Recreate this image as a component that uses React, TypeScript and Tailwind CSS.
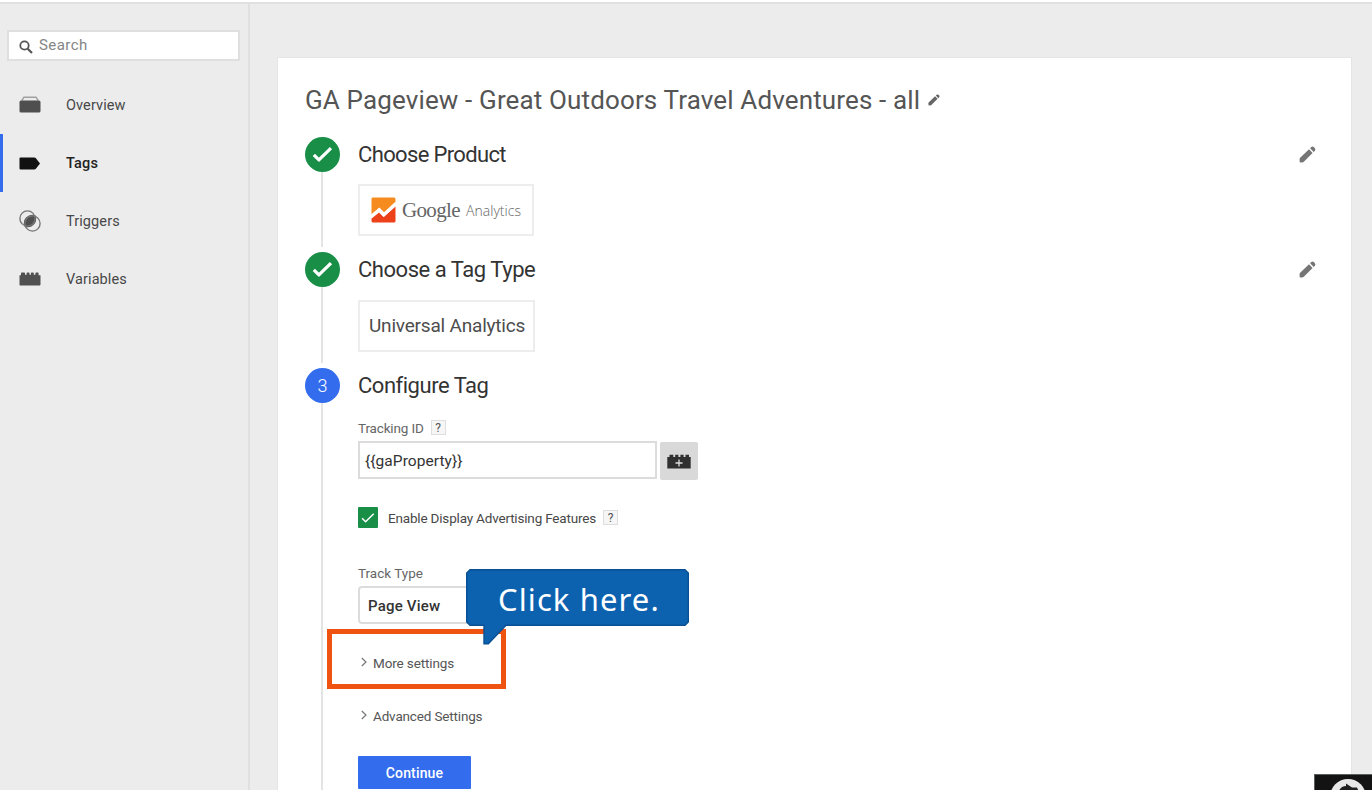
import React from "react";

type IconProps = { className?: string };

const Pencil = ({ className = "" }: IconProps) => (
  <svg viewBox="0 0 17 17" className={className} fill="currentColor">
    <path d="M.9 11.9 10 3.2 13.6 6.9 4.8 15.7Q4 16.4 3 16.4H1.7Q.6 16.4.6 15.4V13Q.6 12.4.9 11.9Z" />
    <path d="M11.1 2.2 12.3 1.1Q13.8.1 15 1.2L15.9 2.2Q16.9 3.4 15.9 4.7L14.7 5.9Z" />
  </svg>
);

const OverviewIcon = () => (
  <svg viewBox="0 0 22 17" className="mb-px h-[17px] w-[22px]">
    <path d="M2.8 4.5 5 1.2H17L19.2 4.5" fill="none" stroke="#a0a0a0" strokeWidth="1.4" />
    <path d="M2 4.4H20Q21.5 4.4 21.5 6V15Q21.5 16.5 20 16.5H2Q.5 16.5.5 15V6Q.5 4.4 2 4.4Z" fill="#4f4f4f" />
  </svg>
);

const TagIcon = () => (
  <svg viewBox="0 0 22 13" className="h-[13px] w-[22px]">
    <path d="M1.5.5H15Q16.3.5 17.1 1.5L21 6.5 17.1 11.5Q16.3 12.5 15 12.5H1.5Q.5 12.5.5 11.5V1.5Q.5.5 1.5.5Z" fill="#111" />
  </svg>
);

const TriggerIcon = () => (
  <svg viewBox="0 0 22 22" className="mb-px h-[22px] w-[22px]">
    <path d="M6.2 15.8A7.5 7.5 0 0 1 15.8 6.2 7.5 7.5 0 0 1 6.2 15.8Z" fill="#505050" stroke="#505050" strokeWidth="1.8" />
    <circle cx="8.5" cy="8.5" r="7.6" fill="none" stroke="#777" strokeWidth="1.4" />
    <circle cx="13.5" cy="13.5" r="7.6" fill="none" stroke="#777" strokeWidth="1.4" />
  </svg>
);

const BrickIcon = () => (
  <svg viewBox="0 0 22 14" className="h-[14px] w-[22px]" fill="#505050">
    <path d="M.5 13V3.2H2V1.2Q2 .4 2.8.4H5.2Q6 .4 6 1.2V2.8H7.6V1.2Q7.6.4 8.3.4H9.8Q10.5.4 10.5 1.2V2.8H11.9V1.2Q11.9.4 12.6.4H14.1Q14.8.4 14.8 1.2V2.8H16.4V1.2Q16.4.4 17.1.4H18.8Q19.6.4 19.6 1.2V3.2H21.5V12.6Q21.5 13.4 20.8 13.4H1.1Q.5 13.4.5 13Z" />
  </svg>
);

const BrickPlusIcon = () => (
  <svg viewBox="0 0 24 15" className="h-[15px] w-[24px]">
    <path d="M.3 14.5V3H2.5V.8H6.3V3H8.2V.8H11.4V3H13.4V.8H16.6V3H18.5V.8H22V3H23.7V14.5Z" fill="#303030" />
    <path d="M12 5.5V12.5M8.5 9H15.5" stroke="#ddd" strokeWidth="1.3" />
  </svg>
);

const CheckIcon = ({ className = "" }: IconProps) => (
  <svg viewBox="0 0 22 18" className={className} fill="none" stroke="white" strokeLinejoin="round">
    <path d="M1.8 9.5 7.2 14.8 20 2.2" />
  </svg>
);

const AnalyticsLogo = () => (
  <svg viewBox="0 0 25 26" className="h-[26px] w-[25px]">
    <path d="M1.5.5H23Q24.5.5 24.5 2V5L13 15.5 8.2 11 .5 18V2Q.5.5 1.5.5Z" fill="#f68b1f" />
    <path d="M24.5 9.5V24Q24.5 25.5 23 25.5H2Q.5 25.5.5 24V21.5L8 15.5 12.5 20Z" fill="#ed411a" />
    <path d="M.2 19.5 8.3 12.7 12.9 17.7 24.8 6.7" fill="none" stroke="white" strokeWidth="3.2" />
  </svg>
);

const Chevron = () => (
  <svg viewBox="0 0 6 10" className="mr-[6px] mb-[2px] h-[10px] w-[6px]">
    <path d="M.8 1 5 5 .8 9" fill="none" stroke="#777" strokeWidth="1.2" />
  </svg>
);

const Help = ({ className = "" }: IconProps) => (
  <span className={`flex h-[15px] w-[15px] items-center justify-center border border-[#dedede] bg-[#f6f6f6] text-[12px] leading-none text-[#555] ${className}`}>?</span>
);

const navItems = [
  { label: "Overview", icon: <OverviewIcon />, active: false, track: "tracking-[0.1px]" },
  { label: "Tags", icon: <TagIcon />, active: true, track: "tracking-[0.2px]" },
  { label: "Triggers", icon: <TriggerIcon />, active: false, track: "tracking-[0.1px]" },
  { label: "Variables", icon: <BrickIcon />, active: false, track: "tracking-[0.1px]" },
];

function Sidebar() {
  return (
    <aside className="w-[250px] shrink-0 border-r-2 border-[#e0e0e0] pt-[26px]">
      <div className="ml-[7px] flex h-[31px] w-[233px] items-center border-2 border-[#dfdfdf] bg-white pl-[10px] text-[15px] text-[#858585]">
        <svg viewBox="0 0 14 14" className="mt-[2px] mr-[6px] h-[14px] w-[14px]" fill="none" stroke="#555">
          <circle cx="5.5" cy="5.5" r="4.2" strokeWidth="1.8" />
          <path d="M8.7 8.7 13 13" strokeWidth="2.2" />
        </svg>
        <span className="tracking-[0.45px]">Search</span>
      </div>
      <nav className="mt-[15px]">
        {navItems.map((item) => (
          <div
            key={item.label}
            className={`flex h-[58px] items-center border-l-[3px] pl-4 text-[14.5px] ${item.active ? "border-[#336dee] font-medium text-[#222]" : "border-transparent text-[#484848]"}`}
          >
            <span className="flex w-[47px]">{item.icon}</span>
            <span className={`mt-[2px] ${item.track}`}>{item.label}</span>
          </div>
        ))}
      </nav>
    </aside>
  );
}

type StepProps = {
  title: string;
  titleClass: string;
  badge: React.ReactNode;
  badgeClass: string;
  className: string;
  lineClass?: string;
  editable?: boolean;
  children: React.ReactNode;
};

function Step({ title, titleClass, badge, badgeClass, className, lineClass = "", editable, children }: StepProps) {
  return (
    <section className={`flex ${className}`}>
      <div className="flex w-[35px] shrink-0 flex-col items-center">
        <div className={`flex h-[35px] w-[35px] shrink-0 items-center justify-center rounded-full ${badgeClass}`}>{badge}</div>
        <div className={`mr-px w-[2px] flex-1 bg-[#e4e4e4] ${lineClass}`} />
      </div>
      <div className="ml-[18px] flex-1">
        <div className="flex h-[36px] items-center justify-between pr-[35px]">
          <h2 className={`text-[22px] leading-[26px] text-[#333] ${titleClass}`}>{title}</h2>
          {editable && <Pencil className="mb-[2px] h-[17px] w-[17px] text-[#757575]" />}
        </div>
        {children}
      </div>
    </section>
  );
}

export default function App() {
  return (
    <div className="relative flex h-[790px] w-[1372px] flex-col overflow-hidden bg-[#ececec] font-['Roboto',sans-serif]">
      <div className="h-[4px] shrink-0 border-b-2 border-[#e0e0e0] bg-white" />
      <div className="flex min-h-0 flex-1">
        <Sidebar />
        <main className="flex-1 pt-[53px] pl-[27px]">
          <div className="h-[760px] w-[1075px] border border-[#e5e5e5] bg-white pt-[25px] pl-[27px]">
            <div className="flex h-[34px] items-center">
              <h1 className="text-[26px] leading-[34px] font-normal tracking-[0.14px] whitespace-nowrap text-[#555]">GA Pageview - Great Outdoors Travel Adventures - all</h1>
              <Pencil className="ml-[8px] h-[12px] w-[12px] text-[#666]" />
            </div>

            <Step
              className="mt-[20px] h-[115px]"
              title="Choose Product"
              titleClass="tracking-[-0.65px]"
              badgeClass="bg-[#188e47]"
              badge={<CheckIcon className="h-[17px] w-[21px] stroke-[3.4]" />}
              lineClass="mb-[5px]"
              editable
            >
              <div className="mt-[11px] flex h-[52px] w-[176px] items-center border-2 border-[#ededed] pl-[11px]">
                <AnalyticsLogo />
                <span className="ml-[6px] font-['Liberation_Serif',serif] text-[21px] leading-[24px] tracking-[-0.65px] text-[#666]">Google</span>
                <span className="ml-[6px] font-['Open_Sans',sans-serif] text-[14px] font-light tracking-[0.05px] text-[#666]">Analytics</span>
              </div>
            </Step>

            <Step
              className="h-[116px]"
              title="Choose a Tag Type"
              titleClass="tracking-[-0.46px]"
              badgeClass="bg-[#188e47]"
              badge={<CheckIcon className="h-[17px] w-[21px] stroke-[3.4]" />}
              lineClass="mb-[5px]"
              editable
            >
              <div className="mt-[12px] flex h-[52px] w-[177px] items-center border-2 border-[#ededed] pl-[9px] text-[19px] tracking-[-0.2px] whitespace-nowrap text-[#4d4d4d]">Universal Analytics</div>
            </Step>

            <Step
              className="h-[470px]"
              title="Configure Tag"
              titleClass="tracking-[-0.48px]"
              badgeClass="bg-[#336dee]"
              badge={<span className="text-[18px] font-light text-white">3</span>}
            >
              <div className="mt-[15px] flex h-[17px] items-center text-[13.5px] text-[#666]">
                <span className="mt-px tracking-[-0.15px]">Tracking ID</span>
                <Help className="ml-[7px]" />
              </div>
              <div className="mt-[5px] flex">
                <div className="flex h-[38px] w-[299px] items-center border-2 border-[#dcdcdc] bg-white pl-[5px] text-[15.5px] tracking-[0.05px] text-[#333]">
                  <span className="mt-[3px]">{"{{gaProperty}}"}</span>
                </div>
                <div className="mt-px ml-[3px] flex h-[38px] w-[38px] items-center justify-center rounded-[2px] bg-[#d9d9d9]">
                  <BrickPlusIcon />
                </div>
              </div>
              <div className="mt-[27px] flex h-[21px] items-center text-[13.5px] text-[#484848]">
                <span className="flex h-[21px] w-[20px] items-center justify-center rounded-[1px] bg-[#188e47]">
                  <CheckIcon className="h-[12px] w-[14px] stroke-[2.4]" />
                </span>
                <span className="mt-px ml-[10px] tracking-[-0.18px]">Enable Display Advertising Features</span>
                <Help className="ml-[7px]" />
              </div>
              <div className="mt-[37px] h-[17px] text-[13.5px] leading-[17px] text-[#666]">Track Type</div>
              <div className="mt-[4px] flex h-[38px] w-[210px] items-center rounded-[4px] border-2 border-[#dcdcdc] pl-[8px] text-[15px] font-medium tracking-[0.2px] text-[#333]">
                <span className="mt-[2px]">Page View</span>
              </div>

              <div className="relative mt-[28px] flex h-[22px] items-center pl-[3px] text-[13.5px] text-[#555]">
                <Chevron />
                <span className="tracking-[-0.12px]">More settings</span>
                <div className="absolute -top-[23px] -left-[31px] h-[60px] w-[179px] border-[5px] border-[#ee5312]" />
                <div className="absolute -top-[83px] left-[108px] h-[76px] w-[224px]">
                  <svg viewBox="0 0 224 76" className="absolute inset-0 h-[76px] w-[224px]">
                    <path d="M4 .7H219L222.3 4V53L219 56.3H40L22.3 74.8H18V56.3H4L.7 53V4Z" fill="#0d62b0" stroke="#094f93" strokeWidth="1.4" />
                  </svg>
                  <span className="absolute top-[8px] left-[32px] font-['Noto_Sans',sans-serif] text-[31px] leading-[44px] font-normal tracking-[1.1px] whitespace-nowrap text-white">Click here.</span>
                </div>
              </div>
              <div className="mt-[31px] flex h-[22px] items-center pl-[3px] text-[13.5px] text-[#555]">
                <Chevron />
                <span className="tracking-[-0.16px]">Advanced Settings</span>
              </div>
              <button className="mt-[29px] flex h-[33px] w-[113px] items-center justify-center rounded-[1px] bg-[#336dee] pt-px text-[14px] font-medium tracking-[0.15px] text-white">Continue</button>
            </Step>
          </div>
        </main>
      </div>
      <div className="absolute top-[774px] left-[1314px] h-[16px] w-[58px] overflow-hidden border-t border-l border-[#59605b] bg-[#131313]">
        <svg viewBox="0 0 58 16" className="h-[16px] w-[58px]">
          <circle cx="33" cy="22" r="18" fill="#e8e8e8" />
          <path d="M24 16Q26 11 31 11V8.5L37 12.5H42L44 17H24Z" fill="#202020" />
        </svg>
      </div>
    </div>
  );
}
